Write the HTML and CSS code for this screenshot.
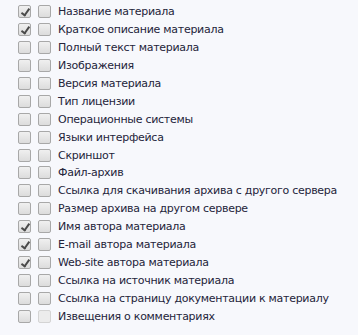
FILE: index.html
```html
<!DOCTYPE html>
<html lang="ru">
<head>
  <meta charset="UTF-8">
  <title>Поля материала</title>
  <link rel="stylesheet" href="styles.css">
</head>
<body>
  <!-- Список полей -->
  <ul class="fields">
    <li><span class="box checked"></span><span class="box"></span>Название материала</li>
    <li><span class="box checked"></span><span class="box"></span>Краткое описание материала</li>
    <li><span class="box"></span><span class="box"></span>Полный текст материала</li>
    <li><span class="box"></span><span class="box"></span>Изображения</li>
    <li><span class="box"></span><span class="box"></span>Версия материала</li>
    <li><span class="box"></span><span class="box"></span>Тип лицензии</li>
    <li><span class="box"></span><span class="box"></span>Операционные системы</li>
    <li><span class="box"></span><span class="box"></span>Языки интерфейса</li>
    <li><span class="box"></span><span class="box"></span>Скриншот</li>
    <li><span class="box"></span><span class="box"></span>Файл-архив</li>
    <li><span class="box"></span><span class="box"></span>Ссылка для скачивания архива с другого сервера</li>
    <li><span class="box"></span><span class="box"></span>Размер архива на другом сервере</li>
    <li><span class="box checked"></span><span class="box"></span>Имя автора материала</li>
    <li><span class="box checked"></span><span class="box"></span>E-mail автора материала</li>
    <li><span class="box checked"></span><span class="box"></span>Web-site автора материала</li>
    <li><span class="box"></span><span class="box"></span>Ссылка на источник материала</li>
    <li><span class="box"></span><span class="box"></span>Ссылка на страницу документации к материалу</li>
    <li><span class="box"></span><span class="box disabled"></span>Извещения о комментариях</li>
  </ul>
</body>
</html>
```

FILE: styles.css
```css
body {
  margin: 0;
  background: #f7f8fc;
  font-family: Tahoma, "DejaVu Sans", sans-serif;
  font-size: 11px;
  letter-spacing: -0.28px;
  color: #24243a;
}
.fields {
  list-style: none;
  margin: 0;
  padding: 3px 0 0 18px;
}
.fields li {
  display: flex;
  align-items: center;
  height: 17.9px;
}
.box {
  position: relative;
  width: 11px;
  height: 11px;
  margin-right: 7px;
  border: 1px solid #a8a8a8;
  border-radius: 2px;
  background: linear-gradient(#f0f0f0, #dcdcdc);
  flex-shrink: 0;
}
.box.checked::after {
  content: "";
  position: absolute;
  left: 4px;
  top: 1px;
  width: 3px;
  height: 7px;
  border: solid #4a4a4a;
  border-width: 0 2px 2px 0;
  transform: rotate(35deg);
}
.box.disabled {
  border-color: #d4d4d4;
  background: #ececec;
}
```
